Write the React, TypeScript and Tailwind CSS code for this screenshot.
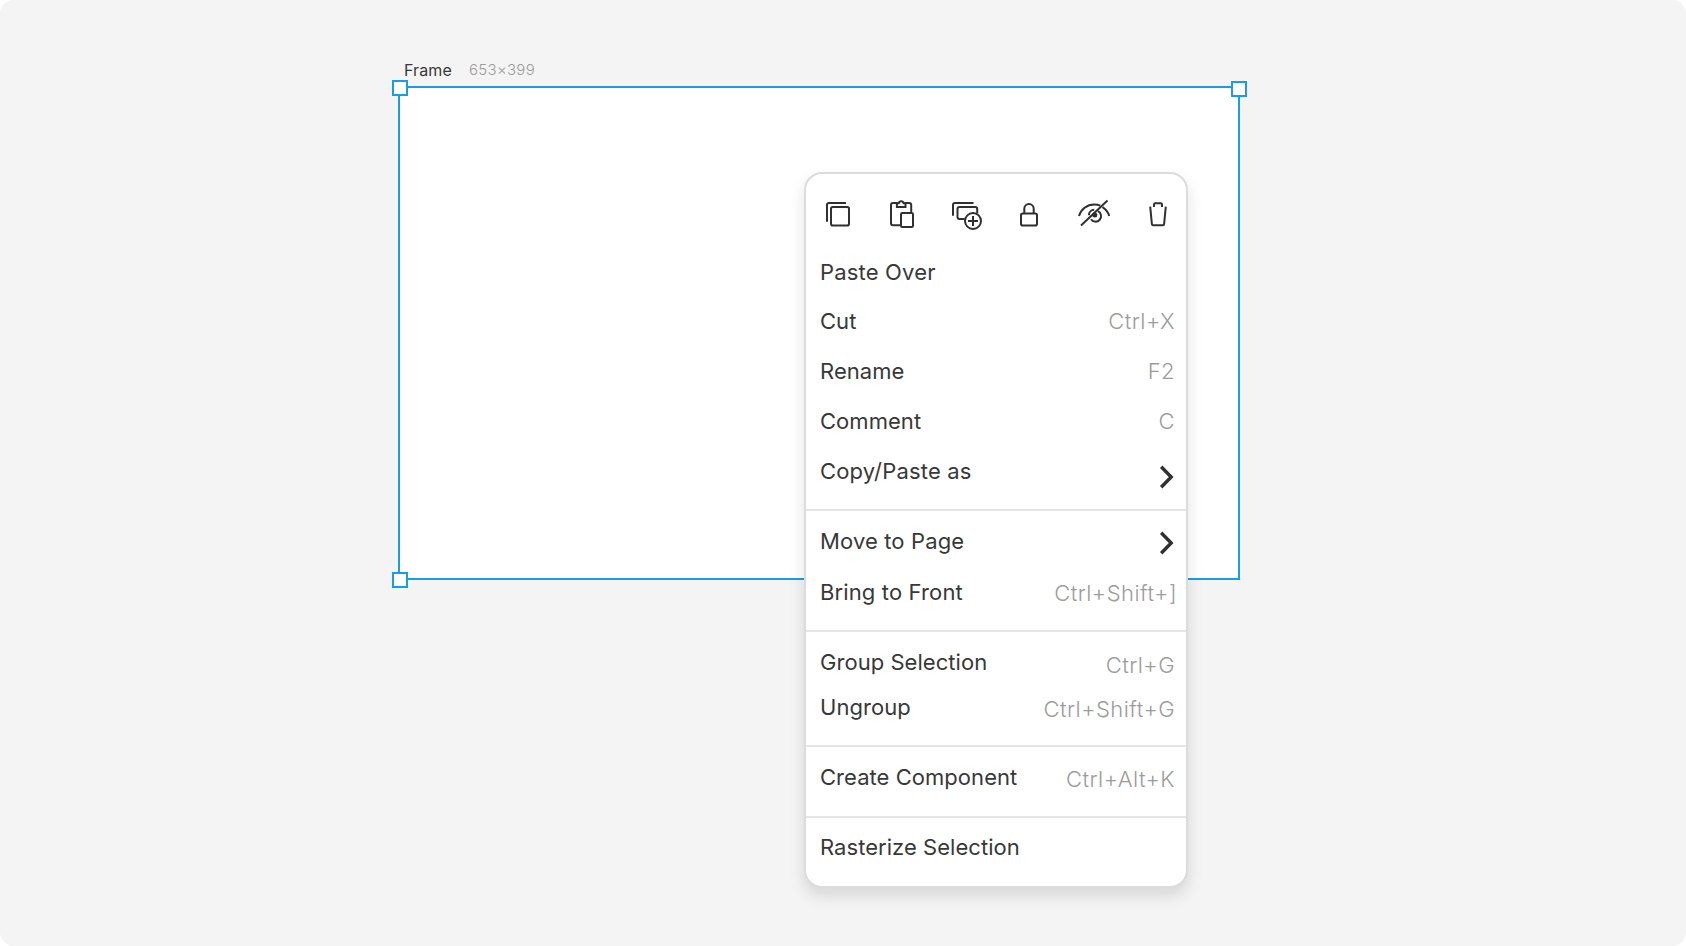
import type { ReactNode } from 'react';

function Icon({ children }: { children: ReactNode }) {
  return (
    <svg
      className="h-10 w-10 shrink-0"
      viewBox="0 0 40 40"
      fill="none"
      stroke="#303030"
      strokeWidth="2"
    >
      {children}
    </svg>
  );
}

function Toolbar() {
  return (
    <div className="flex h-[72px] gap-6 pt-4 pl-3">
      <Icon>
        <path d="M9 31.800V15a2 2 0 0 1 2-2H28" />
        <rect x="13" y="17" width="18" height="18.500" rx="1.800" />
      </Icon>
      <Icon>
        <path d="M18.500 35.300h-7.500a2 2 0 0 1-2-2V15a2 2 0 0 1 2-2h3.900v3.900h8.600V13h3.700a2 2 0 0 1 2 2v7" />
        <path d="M14.900 13.200h1.900c.3-1.500 1.200-2 2.400-2s2.100.5 2.400 2h1.900" />
        <rect x="19" y="23" width="12" height="14" rx="1.300" />
      </Icon>
      <Icon>
        <path d="M7 25.700V15a2 2 0 0 1 2-2H27.500" />
        <path d="M18.800 29h-5.300a2 2 0 0 1-2-2v-8a2 2 0 0 1 2-2h15.700a2 2 0 0 1 2 2v4.500" />
        <circle cx="27" cy="31" r="8" />
        <path d="M27 26v10M22 31h10" />
      </Icon>
      <Icon>
        <rect x="11" y="23.500" width="16" height="12" rx="1.800" />
        <path d="M14.300 23v-4.200a4.700 4.700 0 0 1 9.400 0V23" />
      </Icon>
      <Icon>
        <path d="M5 26c1.800-6.700 8-11.600 15.300-11.600 2.200 0 4.200.4 6 1.200M28.500 17.100c3.300 2.100 5.800 5.200 6.700 8.900" />
        <path d="M14.900 25.200a5.500 5.500 0 0 1 5.300-5.500M24 21.200a5.500 5.500 0 1 1-7 8" />
        <circle cx="20.800" cy="25" r="1.500" fill="#303030" />
        <path d="M33.500 10.500 7 35.500" />
      </Icon>
      <Icon>
        <path d="M12.200 16.700l1.700 17.500a1.200 1.200 0 0 0 1.200 1.100h9.800a1.200 1.200 0 0 0 1.200-1.100L27.800 16.700" />
        <path d="M16 16.900v-2.400q0-1.300 1.300-1.300h5.400q1.300 0 1.300 1.300v2.400" />
      </Icon>
    </div>
  );
}

function Chevron({ className }: { className: string }) {
  return (
    <svg
      className={className}
      width="16"
      height="26"
      viewBox="0 0 16 26"
      fill="none"
      stroke="#303030"
      strokeWidth="3.4"
    >
      <path d="M3.200 2.700 13.200 13 3.200 23.300" />
    </svg>
  );
}

function Row({
  label,
  className,
  children,
}: {
  label: string;
  className: string;
  children?: ReactNode;
}) {
  return (
    <div className={`flex items-center justify-between pl-3.5 ${className}`}>
      <span>{label}</span>
      {children}
    </div>
  );
}

function Keys({ text, className }: { text: string; className: string }) {
  return (
    <span className={`font-light tracking-[0.02em] text-[#9c9c9c] ${className}`}>{text}</span>
  );
}

function Divider() {
  return <div className="h-0.5 bg-[#e4e4e4]" />;
}

function ContextMenu() {
  return (
    <div className="absolute top-[172px] left-[804px] flex h-[716px] w-[384px] flex-col rounded-[18px] border-2 border-[#dcdcdc] bg-white text-[22px] leading-none font-normal tracking-[0.002em] whitespace-nowrap text-[#383838] shadow-[0_8px_16px_rgba(0,0,0,0.12)]">
      <Toolbar />
      <div className="flex flex-col pb-[13px]">
        <Row label="Paste Over" className="h-[50px] pt-0.5 tracking-[0.008em]" />
        <Row label="Cut" className="h-[50px]">
          <Keys text="Ctrl+X" className="mr-[11px]" />
        </Row>
        <Row label="Rename" className="h-[50px]">
          <Keys text="F2" className="mr-[11px]" />
        </Row>
        <Row label="Comment" className="h-[50px]">
          <Keys text="C" className="mr-[11px]" />
        </Row>
        <Row label="Copy/Paste as" className="h-[50px] tracking-[0.008em]">
          <Chevron className="mt-3 mr-3" />
        </Row>
      </div>
      <Divider />
      <div className="flex flex-col gap-px pt-[5px] pb-[13px]">
        <Row label="Move to Page" className="h-[50px] tracking-[0.006em]">
          <Chevron className="mt-1 mr-3" />
        </Row>
        <Row label="Bring to Front" className="h-[50px] tracking-[0.006em]">
          <Keys text="Ctrl+Shift+]" className="mt-0.5 mr-[9px]" />
        </Row>
      </div>
      <Divider />
      <div className="flex flex-col gap-px pt-2 pb-4">
        <Row label="Group Selection" className="h-11">
          <Keys text="Ctrl+G" className="mt-1.5 mr-[11px]" />
        </Row>
        <Row label="Ungroup" className="h-11">
          <Keys text="Ctrl+Shift+G" className="mt-1 mr-[11px]" />
        </Row>
      </div>
      <Divider />
      <div className="flex flex-col pt-[5px] pb-3.5">
        <Row label="Create Component" className="h-[50px]">
          <Keys text="Ctrl+Alt+K" className="mt-1 mr-[11px]" />
        </Row>
      </div>
      <Divider />
      <div className="flex flex-col pt-1 pb-3.5">
        <Row label="Rasterize Selection" className="h-[50px]" />
      </div>
    </div>
  );
}

function SelectedFrame() {
  return (
    <>
      <div className="absolute top-[60px] left-[404px] flex items-start gap-[17px] leading-5">
        <span className="text-[16px] tracking-[0.008em] text-[#383838]">Frame</span>
        <span className="text-[15px] font-light tracking-[0.02em] text-[#9c9c9c]">653×399</span>
      </div>
      <div className="absolute top-[86px] left-[398px] h-[494px] w-[842px] border-2 border-[#1b9de2] bg-white" />
      <div className="absolute top-20 left-[392px] size-4 border-2 border-[#1b9de2] bg-white" />
      <div className="absolute top-[81px] left-[1231px] size-4 border-2 border-[#1b9de2] bg-white" />
      <div className="absolute top-[572px] left-[392px] size-4 border-2 border-[#1b9de2] bg-white" />
    </>
  );
}

export default function App() {
  return (
    <div className="h-[946px] w-[1686px] bg-white font-['Inter',sans-serif]">
      <main className="relative h-full w-full overflow-hidden rounded-[14px] bg-[#f4f4f4]">
        <SelectedFrame />
        <ContextMenu />
      </main>
    </div>
  );
}
